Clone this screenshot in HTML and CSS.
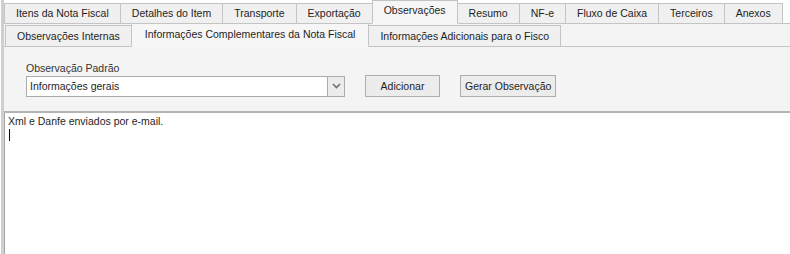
FILE: index.html
```html
<html>

<head>
  <title>Observações</title>
  <meta name="viewport" content="width=device-width, initial-scale=1">
  <link rel="stylesheet" href="styles.css">
</head>

<body>
  <div class="frame">
    <div class="tabRow mainTabs">
      <div class="tab">Itens da Nota Fiscal</div>
      <div class="tab">Detalhes do Item</div>
      <div class="tab">Transporte</div>
      <div class="tab">Exportação</div>
      <div class="tab active">Observações</div>
      <div class="tab">Resumo</div>
      <div class="tab">NF-e</div>
      <div class="tab">Fluxo de Caixa</div>
      <div class="tab">Terceiros</div>
      <div class="tab">Anexos</div>
    </div>
    <div class="tabRow subTabs">
      <div class="tab">Observações Internas</div>
      <div class="tab active">Informações Complementares da Nota Fiscal</div>
      <div class="tab">Informações Adicionais para o Fisco</div>
    </div>
    <div class="panel">
      <label class="fieldLabel">Observação Padrão</label>
      <div class="fieldRow">
        <div class="combo">
          <span class="comboText">Informações gerais</span>
          <span class="comboArrow">
            <svg width="9" height="6" viewBox="0 0 9 6">
              <path d="M1 1 L4.5 4.5 L8 1" fill="none" stroke="#707070" stroke-width="1.6" />
            </svg>
          </span>
        </div>
        <button class="btn btnAdd">Adicionar</button>
        <button class="btn">Gerar Observação</button>
      </div>
    </div>
    <div class="editor">
      <div class="editorText">Xml e Danfe enviados por e-mail.</div>
      <div class="caret"></div>
    </div>
  </div>
</body>

</html>
```

FILE: styles.css
```css
body {
  margin: 0;
  background-color: #ffffff;
  font-family: "Liberation Sans", Arial, sans-serif;
  font-size: 10.5px;
  color: #1e1e1e;
}

.frame {
  height: 254px;
  margin-left: 1px;
  border-left: 3px solid #cfcfcf;
  background-color: #f4f4f4;
  display: flex;
  flex-direction: column;
}

.tabRow {
  display: flex;
  align-items: flex-end;
  border-bottom: 1px solid #c4c4c4;
}

.mainTabs {
  height: 23px;
  background-color: #ffffff;
}

.subTabs {
  height: 22px;
  padding-left: 1px;
}

.tab {
  height: 19px;
  line-height: 19px;
  padding: 0 11px;
  margin-bottom: -1px;
  border: 1px solid #c4c4c4;
  border-right: none;
  background-color: #f0f0f0;
  white-space: nowrap;
  position: relative;
}

.tab:last-child {
  border-right: 1px solid #c4c4c4;
}

.tab.active {
  height: 22px;
  line-height: 19px;
  background-color: #f6f6f6;
  border-bottom: 1px solid #f6f6f6;
  border-right: 1px solid #c4c4c4;
  margin-right: -1px;
  z-index: 1;
}

.subTabs .tab {
  height: 20px;
  line-height: 20px;
}

.subTabs .tab.active {
  height: 22px;
  line-height: 20px;
  padding: 0 13px;
}

.panel {
  height: 66px;
  padding: 14px 0 0 22px;
  box-sizing: border-box;
  border-bottom: 2px solid #b4b4b4;
}

.fieldLabel {
  display: block;
  height: 14px;
  line-height: 14px;
  color: #333333;
}

.fieldRow {
  display: flex;
  align-items: center;
  gap: 20px;
}

.combo {
  width: 317px;
  height: 19px;
  border: 1px solid #ababab;
  background-color: #ffffff;
  display: flex;
  align-items: center;
}

.comboText {
  flex: 1;
  padding-left: 3px;
}

.comboArrow {
  width: 16px;
  height: 19px;
  border-left: 1px solid #ababab;
  background-color: #ececec;
  display: flex;
  align-items: center;
  justify-content: center;
}

.btn {
  height: 22px;
  padding: 0 4px;
  border: 1px solid #adadad;
  background-color: #ececec;
  font-family: inherit;
  font-size: 10.5px;
  color: #1e1e1e;
}

.btnAdd {
  width: 75px;
}

.editor {
  flex: 1;
  background-color: #ffffff;
  border-left: 1px solid #a8a8a8;
  padding: 2px 0 0 3px;
}

.editorText {
  line-height: 13px;
}

.caret {
  width: 1px;
  height: 12px;
  margin: 1px 0 0 1px;
  background-color: #000000;
}
```
